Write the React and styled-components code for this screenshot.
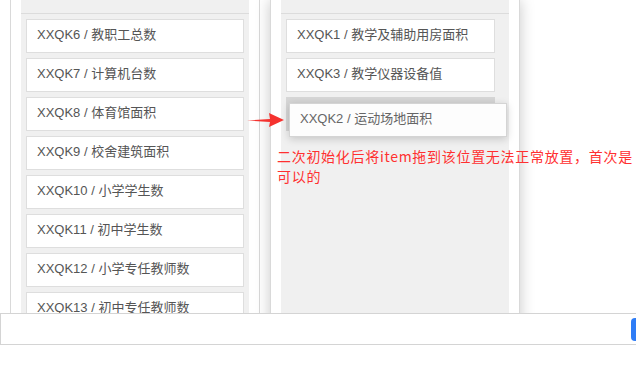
import styled, { createGlobalStyle } from "styled-components";

const GlobalStyle = createGlobalStyle`
  html, body {
    margin: 0;
    padding: 0;
    background: #fff;
    font-family: "Liberation Sans", "Noto Sans CJK SC", sans-serif;
  }
`;

const Page = styled.div`
  width: 636px;
  height: 366px;
  overflow: hidden;
`;

const Stage = styled.div`
  position: relative;
  height: 313px;
  overflow: hidden;
  display: flex;
  gap: 10px;
  padding-left: 10px;
`;

const Panel = styled.div`
  box-sizing: border-box;
  width: 250px;
  height: 420px;
  border: 1px solid #d9d9d9;
  border-top: none;
  background: #fff;
  padding: 0 10px;
  box-shadow: ${(p) => (p.$raised ? "0 0 14px rgba(0,0,0,0.22)" : "none")};
`;

const Inner = styled.div`
  background: #f0f0f0;
  height: 100%;
`;

const Header = styled.div`
  height: 13px;
  border-bottom: 1px solid #dcdcdc;
`;

const List = styled.div`
  display: flex;
  flex-direction: column;
  gap: 5px;
  padding: 5px 5px;
`;

const Item = styled.div`
  box-sizing: border-box;
  width: ${(p) => p.$w}px;
  height: 34px;
  background: #fff;
  border: 1px solid #dedede;
  padding: 0 0 2px 10px;
  display: flex;
  align-items: center;
  font-size: 13px;
  line-height: 16px;
  color: #555;
  white-space: nowrap;
`;

const Placeholder = styled.div`
  width: ${(p) => p.$w}px;
  height: 34px;
  background: #d6d6d6;
`;

const Helper = styled(Item)`
  position: absolute;
  left: 289px;
  top: 103px;
  background: #fdfdfd;
  border-color: #d4d4d4;
  color: #666;
  box-shadow: 0 2px 8px rgba(0, 0, 0, 0.18);
`;

const Note = styled.div`
  position: absolute;
  left: 277px;
  top: 146px;
  width: 362px;
  font-family: "Noto Sans CJK SC", sans-serif;
  font-size: 14px;
  letter-spacing: 0.7px;
  line-height: 20px;
  color: #ff3030;
`;

const Arrow = styled.svg`
  position: absolute;
  left: 246px;
  top: 111px;
`;

const Bar = styled.div`
  height: 30px;
  border-top: 1px solid #d4d4d4;
  border-bottom: 1px solid #d4d4d4;
  border-left: 1px solid #d4d4d4;
  display: flex;
  align-items: center;
  justify-content: flex-end;
`;

const BlueButton = styled.div`
  width: 12px;
  height: 23px;
  margin-right: -7px;
  background: #2f7df6;
  border-radius: 4px;
`;

const leftItems = [
  "XXQK6 / 教职工总数",
  "XXQK7 / 计算机台数",
  "XXQK8 / 体育馆面积",
  "XXQK9 / 校舍建筑面积",
  "XXQK10 / 小学学生数",
  "XXQK11 / 初中学生数",
  "XXQK12 / 小学专任教师数",
  "XXQK13 / 初中专任教师数",
];

const rightItems = ["XXQK1 / 教学及辅助用房面积", "XXQK3 / 教学仪器设备值"];

const App = () => {
  return (
    <Page>
      <GlobalStyle />
      <Stage>
        <Panel>
          <Inner>
            <Header />
            <List>
              {leftItems.map((t) => (
                <Item key={t} $w={218}>
                  {t}
                </Item>
              ))}
            </List>
          </Inner>
        </Panel>
        <Panel $raised>
          <Inner>
            <Header />
            <List>
              {rightItems.map((t) => (
                <Item key={t} $w={209}>
                  {t}
                </Item>
              ))}
              <Placeholder $w={209} />
            </List>
          </Inner>
        </Panel>
        <Helper $w={218}>XXQK2 / 运动场地面积</Helper>
        <Arrow width="40" height="18" viewBox="0 0 40 18">
          <path d="M1 9.5 L24 8 L23 2 L38 9 L23 16 L24 11 Z" fill="#f5322f" />
        </Arrow>
        <Note>二次初始化后将item拖到该位置无法正常放置，首次是可以的</Note>
      </Stage>
      <Bar>
        <BlueButton />
      </Bar>
    </Page>
  );
};

export default App;
